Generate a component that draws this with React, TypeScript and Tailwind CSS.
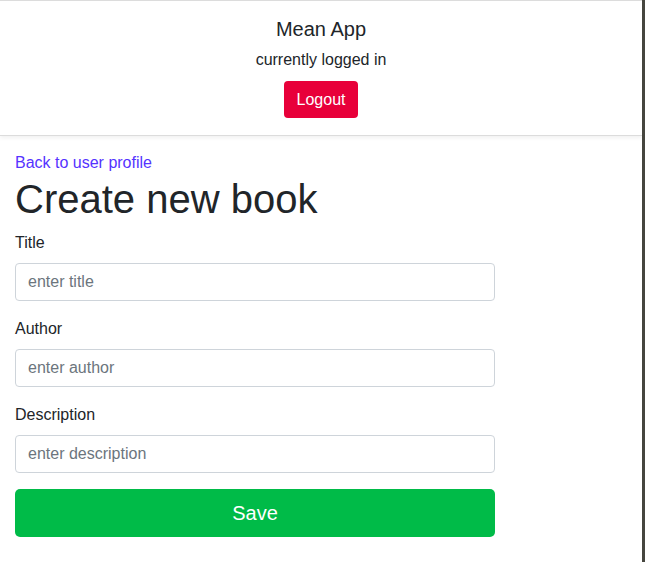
const fields = [
  { id: "title", label: "Title", placeholder: "enter title" },
  { id: "author", label: "Author", placeholder: "enter author" },
  { id: "description", label: "Description", placeholder: "enter description" },
]

const App = () => {
  return (
    <div className="flex h-[562px] bg-white text-[#212529]" style={{ fontFamily: '"Liberation Sans", Arial, sans-serif' }}>
      <div className="flex-1">
        <header className="border-t border-b border-[#dcdcdc] shadow-[0_2px_4px_rgba(0,0,0,0.06)] h-[136px] flex flex-col items-center pt-[16px]">
          <h5 className="text-[20px] leading-[24px]">Mean App</h5>
          <p className="text-[16px] leading-[24px] mt-[7px]">currently logged in</p>
          <button className="mt-[9px] h-[37px] px-[13px] rounded-[4px] bg-[#e8003a] text-white text-[16px]">Logout</button>
        </header>

        <div className="px-[15px] pt-[15px]">
          <a href="/" className="block text-[#5533ff] text-[16px] leading-[24px]">Back to user profile</a>
          <h1 className="text-[40px] leading-[48px] mb-[8px]">Create new book</h1>
          <form className="w-[480px]">
            {fields.map(f => (
              <div key={f.id} className="mb-[16px]">
                <label htmlFor={f.id} className="block text-[16px] leading-[24px] mb-[8px]">{f.label}</label>
                <input
                  id={f.id}
                  type="text"
                  placeholder={f.placeholder}
                  className="w-full h-[38px] px-[12px] border border-[#ced4da] rounded-[4px] text-[16px] placeholder:text-[#6c757d] focus:outline-none"
                />
              </div>
            ))}
            <button type="submit" className="w-full h-[48px] rounded-[5px] bg-[#00bb48] text-white text-[20px]">Save</button>
          </form>
        </div>
      </div>
      <div className="w-[3px] bg-[#46463f]" />
    </div>
  )
}

export default App
